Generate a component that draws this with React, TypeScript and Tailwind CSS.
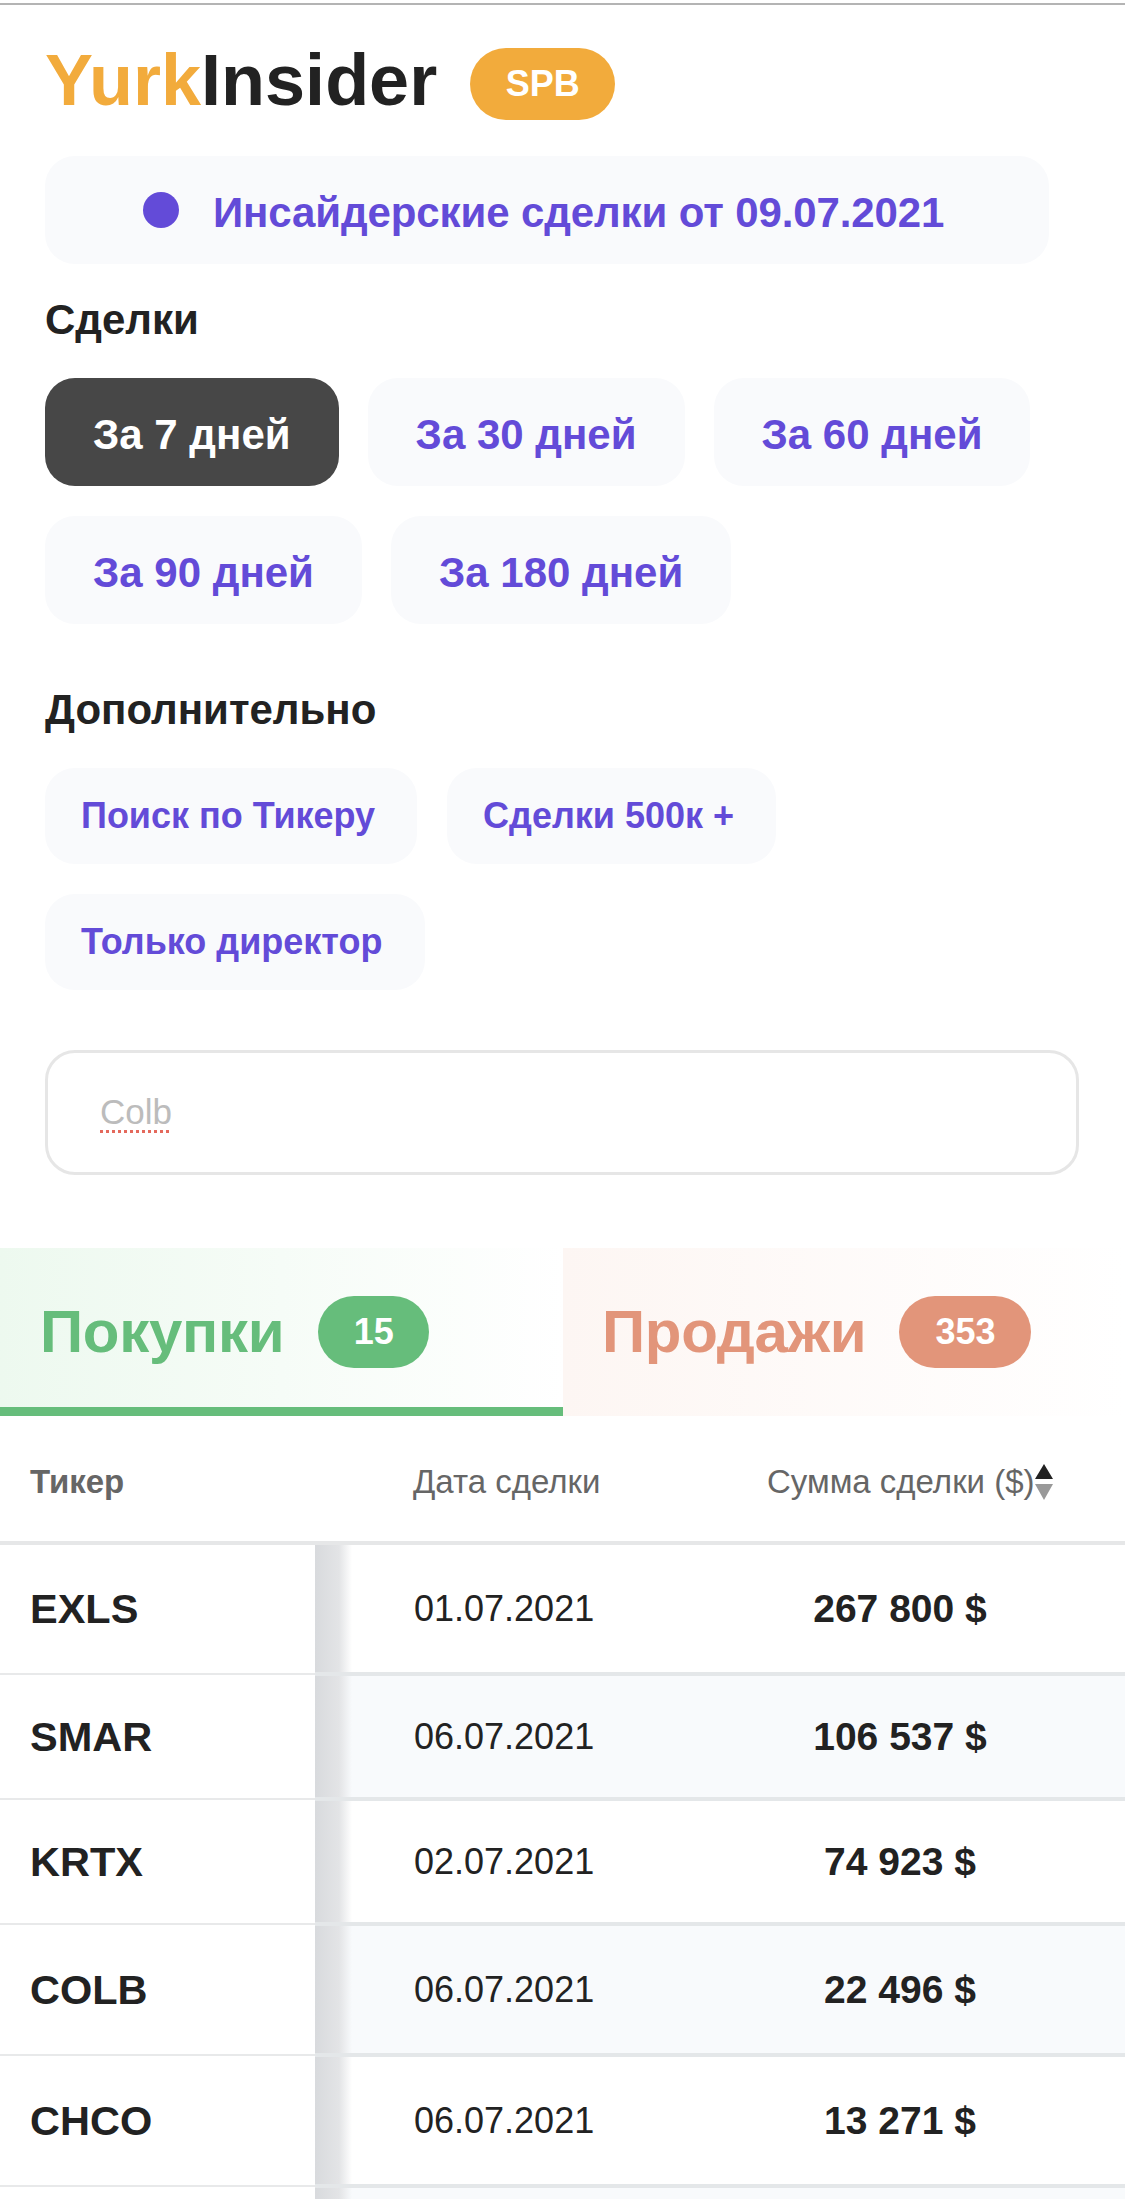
const rows = [
  { ticker: 'EXLS', date: '01.07.2021', sum: '267 800 $', h: 'h-[131px]', bg: 'bg-white' },
  { ticker: 'SMAR', date: '06.07.2021', sum: '106 537 $', h: 'h-[125px]', bg: 'bg-[#f8fafc]' },
  { ticker: 'KRTX', date: '02.07.2021', sum: '74 923 $', h: 'h-[125px]', bg: 'bg-white' },
  { ticker: 'COLB', date: '06.07.2021', sum: '22 496 $', h: 'h-[131px]', bg: 'bg-[#f8fafc]' },
  { ticker: 'CHCO', date: '06.07.2021', sum: '13 271 $', h: 'h-[131px]', bg: 'bg-white' },
];

function PeriodButton({ label, active }: { label: string; active?: boolean }) {
  return (
    <div
      className={
        active
          ? 'flex h-[108px] items-center rounded-[30px] bg-[#474747] px-[48px] pt-[4px] text-[42px] font-bold text-white'
          : 'flex h-[108px] items-center rounded-[30px] bg-[#f9fafc] px-[48px] pt-[4px] text-[42px] font-bold text-[#634bd8]'
      }
    >
      {label}
    </div>
  );
}

function FilterButton({ label }: { label: string }) {
  return (
    <div className="flex h-[96px] items-center rounded-[30px] bg-[#f9fafc] pr-[42px] pl-[36px] text-[36px] font-bold text-[#634bd8]">
      {label}
    </div>
  );
}

function Row({ ticker, date, sum, h, bg }: (typeof rows)[number]) {
  return (
    <div className={`flex ${h}`}>
      <div className="mb-px flex w-[315px] items-center border-b-2 border-[#e8e9ea] bg-white pl-[30px] text-[41.5px] font-bold text-[#222]">
        {ticker}
      </div>
      <div className={`flex flex-1 items-center border-b-4 border-[#e4e7e9] ${bg}`}>
        <div className="h-full w-[37px] bg-gradient-to-r from-[#d8dadd] via-[#e3e4e6] via-65% to-transparent" />
        <div className="w-[323px] pl-[62px] text-[36px] text-[#222]">{date}</div>
        <div className="w-[450px] pt-[2px] text-center text-[39px] font-bold text-[#222]">{sum}</div>
      </div>
    </div>
  );
}

export default function App() {
  return (
    <div className="h-[2199px] w-[1125px] overflow-hidden bg-white font-['Liberation_Sans',Arial,sans-serif]">
      <div className="mt-[3px] h-[2px] bg-[#b4b4b4]" />

      <div className="px-[45px]">
        {/* Logo */}
        <div className="mt-[43px] flex h-[72px] items-center">
          <div className="pb-[8px] text-[72px] leading-none font-bold text-[#222]">
            <span className="text-[#f2ab3c]">Yurk</span>Insider
          </div>
          <div className="ml-[33px] flex h-[72px] w-[145px] items-center justify-center rounded-[36px] bg-[#f2ab3c] text-[36px] font-bold text-white">
            SPB
          </div>
        </div>

        <div className="mt-[36px] flex h-[108px] w-[1004px] items-center gap-[34px] rounded-[30px] bg-[#f9fafc] pl-[98px]">
          <div className="h-[36px] w-[36px] rounded-full bg-[#634bd8]" />
          <div className="pt-[4px] text-[42px] font-bold tracking-[-0.12px] text-[#634bd8]">
            Инсайдерские сделки от 09.07.2021
          </div>
        </div>

        <div className="mt-[32px] mb-[34px] h-[48px] text-[42px] leading-[48px] font-bold text-[#222]">Сделки</div>
        <div className="flex flex-wrap gap-x-[29px] gap-y-[30px]">
          <PeriodButton label="За 7 дней" active />
          <PeriodButton label="За 30 дней" />
          <PeriodButton label="За 60 дней" />
          <PeriodButton label="За 90 дней" />
          <PeriodButton label="За 180 дней" />
        </div>

        <div className="mt-[62px] mb-[34px] h-[48px] text-[42px] leading-[48px] font-bold text-[#222]">Дополнительно</div>
        <div className="flex w-[800px] flex-wrap gap-x-[30px] gap-y-[30px]">
          <FilterButton label="Поиск по Тикеру" />
          <FilterButton label="Сделки 500к +" />
          <FilterButton label="Только директор" />
        </div>

        {/* Search field, the value is shown as placeholder-grey with the spellcheck dots */}
        <div className="mt-[60px] flex h-[125px] w-[1034px] items-center rounded-[30px] border-[3px] border-[#e6e6e6] pl-[52px]">
          <span className="text-[35px] text-[#bcbcbc] underline decoration-[#e4695c] decoration-dotted decoration-[3px] underline-offset-[6px]">
            Colb
          </span>
        </div>
      </div>

      {/* Tabs */}
      <div className="mt-[73px] flex h-[168px]">
        <div className="flex w-[563px] items-center bg-gradient-to-r from-[#edf9ef] to-white pl-[40px] shadow-[inset_0_-9px_0_#66bd7b]">
          <span className="text-[60px] font-bold tracking-[-0.3px] text-[#66bd7b]">Покупки</span>
          <span className="ml-[34px] flex h-[72px] w-[111px] items-center justify-center rounded-[36px] bg-[#66bd7b] text-[36px] font-bold text-white">
            15
          </span>
        </div>
        <div className="flex flex-1 items-center bg-gradient-to-r from-[#fdf6f3] to-white pl-[39px]">
          <span className="text-[60px] font-bold tracking-[-0.3px] text-[#e2957a]">Продажи</span>
          <span className="ml-[33px] flex h-[72px] w-[132px] items-center justify-center rounded-[36px] bg-[#e2957a] text-[36px] font-bold text-white">
            353
          </span>
        </div>
      </div>

      {/* Table */}
      <div className="flex h-[129px] border-b-4 border-[#e6e7e8] pt-[6px] text-[33px] text-[#666]">
        <div className="flex w-[315px] items-center pl-[30px] font-bold">Тикер</div>
        <div className="flex w-[360px] items-center pl-[98px]">Дата сделки</div>
        <div className="flex flex-1 items-center pl-[92px]">
          <span>Сумма сделки ($)</span>
          <svg width="18" height="36" viewBox="0 0 18 36" className="mt-[1px]">
            <path d="M9 0 18 15H0Z" fill="#222" />
            <path d="M0 20H18L9 36Z" fill="#999" />
          </svg>
        </div>
      </div>

      {rows.map((r) => (
        <Row key={r.ticker} {...r} />
      ))}

      <div className="flex h-[20px]">
        <div className="w-[315px] bg-white" />
        <div className="flex-1 bg-[#f8fafc]">
          <div className="h-full w-[37px] bg-gradient-to-r from-[#d8dadd] via-[#e3e4e6] via-65% to-transparent" />
        </div>
      </div>
    </div>
  );
}
